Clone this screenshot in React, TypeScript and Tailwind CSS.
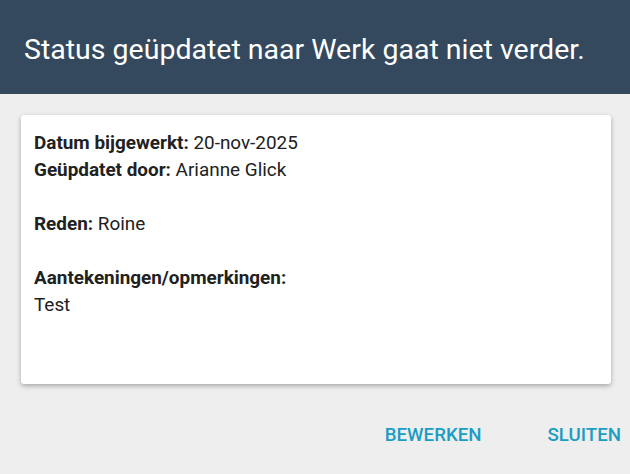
import React from "react"

const Field = ({ label, value }: { label: string; value: string }) => (
  <div>
    <span className="font-bold">{label}</span> {value}
  </div>
)

export default function App() {
  return (
    <div
      className="w-[630px] h-[474px] bg-[#eeeeee] flex flex-col"
      style={{ fontFamily: "Roboto, 'Noto Sans', sans-serif" }}>
      <div className="h-[94px] bg-[#34495e] flex items-center px-6 pt-[6px]">
        <h1 className="text-white text-[28.5px] leading-none">
          Status geüpdatet naar Werk gaat niet verder.
        </h1>
      </div>
      <div className="pl-[21px] pr-[19px] pt-[21px]">
        <div className="h-[269px] bg-white rounded-[3px] shadow-[0_2px_5px_rgba(0,0,0,0.3)] px-[13px] pt-[14px] text-[18.9px] leading-[27px] text-[#212121]">
          <Field label="Datum bijgewerkt:" value="20-nov-2025" />
          <Field label="Geüpdatet door:" value="Arianne Glick" />
          <div className="h-[27px]" />
          <Field label="Reden:" value="Roine" />
          <div className="h-[27px]" />
          <div className="font-bold">Aantekeningen/opmerkingen:</div>
          <div>Test</div>
        </div>
      </div>
      <div className="flex justify-end items-center gap-[66px] pr-[9px] mt-[42px]">
        <button className="text-[#1a9dc4] text-[18.7px] font-medium uppercase leading-[18px]">
          Bewerken
        </button>
        <button className="text-[#1a9dc4] text-[18.7px] font-medium uppercase leading-[18px]">
          Sluiten
        </button>
      </div>
    </div>
  )
}
